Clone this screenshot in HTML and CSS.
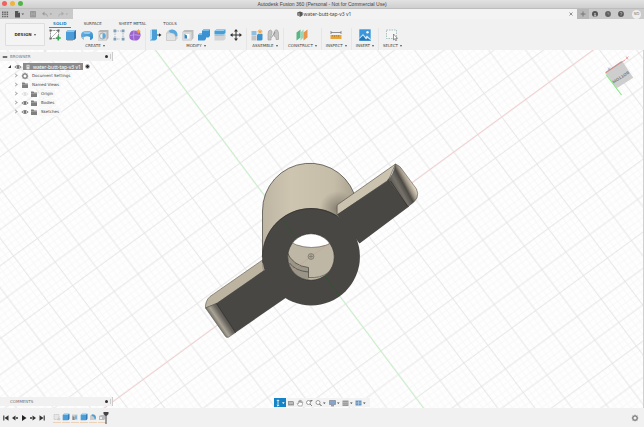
FILE: index.html
```
<!DOCTYPE html>
<html lang="en">
<head>
<meta charset="utf-8">
<title>Autodesk Fusion 360</title>
<link rel="stylesheet" href="styles.css">
</head>
<body>
<svg class="defs" aria-hidden="true">
  <defs>
    <linearGradient id="blue" x1="0" y1="0" x2="1" y2="1"><stop offset="0" stop-color="#6bb6e6"/><stop offset="1" stop-color="#2f87c9"/></linearGradient>
    <symbol id="i-cube" viewBox="0 0 12 12"><path d="M1 3l2-2h8v8l-2 2H1z" fill="#4a9dd8"/><path d="M1 3l2-2h8L9 3z" fill="#8cc9ee"/><path d="M9 3l2-2v8l-2 2z" fill="#3479b0"/></symbol>
    <symbol id="i-folder" viewBox="0 0 8 8"><path d="M1 1.500h2.500l.7 1H7V7H1z" fill="#808080"/><path d="M1 3.500h6" stroke="#bbb" stroke-width=".5"/></symbol>
    <symbol id="i-eye" viewBox="0 0 8 8"><path d="M.8 4Q4 .8 7.200 4 4 7.200.8 4z" fill="none" stroke="#888" stroke-width=".9"/><circle cx="4" cy="4" r="1.400" fill="#777"/></symbol>
    <symbol id="i-gear" viewBox="0 0 8 8"><circle cx="4" cy="4" r="2.200" fill="none" stroke="#808080" stroke-width="1.300"/><path d="M4 .7v1M4 6.300v1M.7 4h1M6.300 4h1M1.700 1.700l.7.7M5.600 5.600l.7.7M6.300 1.700l-.7.7M2.400 5.600l-.7.7" stroke="#808080" stroke-width=".9"/></symbol>
  </defs>
</svg>
<div class="app">
  <header class="titlebar">
    <div class="lights"><i class="red"></i><i class="amber"></i><i class="green"></i></div>
    <h1>Autodesk Fusion 360 (Personal - Not for Commercial Use)</h1>
  </header>

  <div class="appbar">
    <div class="quick">
      <button aria-label="Data panel"><svg viewBox="0 0 8 8"><path d="M1 1.500h1.500V3H1zM3.300 1.500h1.500V3H3.300zM5.600 1.500h1.500V3H5.600zM1 3.600h1.500v1.500H1zM3.300 3.600h1.500v1.500H3.300zM5.600 3.600h1.500v1.500H5.600zM1 5.700h1.500v1.500H1zM3.300 5.700h1.500v1.500H3.300zM5.600 5.700h1.500v1.500H5.600z" fill="#666"/></svg></button>
      <button class="wide" aria-label="File"><svg viewBox="0 0 12 8"><path d="M2 1h3l2 2v4.500H2z" fill="#555"/><path d="M5 1v2h2" fill="#aaa"/><path d="M8.500 3.500h2.600L9.800 5z" fill="#555"/></svg></button>
      <button aria-label="Save"><svg viewBox="0 0 8 8"><path d="M1.500 1.500h5v5.500h-5z" fill="#aaa" stroke="#8a8a8a" stroke-width=".7"/><path d="M2.500 2h3v1.500h-3zM2.500 4.800h3v2h-3z" fill="#999"/></svg></button>
      <button class="wide" aria-label="Undo"><svg viewBox="0 0 12 8"><path d="M3.500 1.500L1 3.800l2.500 2z" fill="#999"/><path d="M3 3.800Q6.500 3.300 6.500 6.500" fill="none" stroke="#999" stroke-width=".8"/><path d="M8.500 3.500h2.600L9.800 5z" fill="#999"/></svg></button>
      <button class="wide" aria-label="Redo"><svg viewBox="0 0 12 8"><path d="M4.500 1.500L7 3.800l-2.500 2z" fill="#aaa"/><path d="M5 3.800Q1.500 3.300 1.500 6.500" fill="none" stroke="#aaa" stroke-width=".8"/><path d="M8.500 3.500h2.600L9.800 5z" fill="#aaa"/></svg></button>
    </div>
    <div class="doc">
      <svg viewBox="0 0 6 6"><path d="M.3 1.500L3 .4l2.700 1v2.800L3.300 5.700.3 4.300z" fill="#555"/><path d="M.3 1.500L3 2.300v3.300L.3 4.300z" fill="#8a8a8a"/></svg>
      <span>water-butt-tap-v3 v1</span>
      <button class="close" aria-label="Close document"><svg viewBox="0 0 8 8"><path d="M2.500 2.500l3 3M5.500 2.500l-3 3" stroke="#777" stroke-width=".8"/></svg></button>
    </div>
    <div class="account">
      <button class="new" aria-label="New design"><svg viewBox="0 0 8 8"><path d="M4 1.500v5M1.500 4h5" stroke="#777"/></svg></button>
      <button aria-label="Extensions"><svg viewBox="0 0 8 8"><circle cx="4" cy="4" r="3" fill="#555"/><path d="M4 4.500l2 2H2.500z" fill="#ccc"/><circle cx="4" cy="3.800" r=".9" fill="#bbb"/></svg></button>
      <button aria-label="Job status"><svg viewBox="0 0 8 8"><circle cx="4" cy="4" r="2.900" fill="#606060"/><path d="M4 2.200V4h1.500" fill="none" stroke="#999" stroke-width=".7"/></svg></button>
      <button aria-label="Help"><svg viewBox="0 0 8 8"><circle cx="4" cy="4" r="2.900" fill="#555"/><path d="M3 3.300Q3 2.300 4 2.300T5 3.300Q5 4 4 4.300V5M4 5.500v.7" fill="none" stroke="#bbb" stroke-width=".7"/></svg></button>
      <button class="avatar">SD</button>
    </div>
  </div>

  <div class="ribbon">
    <button class="workspace">DESIGN <i class="caret"></i></button>
    <div class="ribbon-main">
      <nav class="tabs">
        <a href="#" class="active">SOLID</a><a href="#">SURFACE</a><a href="#">SHEET METAL</a><a href="#">TOOLS</a>
      </nav>
      <div class="groups">
        <section class="group">
          <div class="tools">
            <button aria-label="Create sketch"><svg viewBox="0 0 12 12"><path d="M1.500 1.500h8v8h-8z" fill="#fff" stroke="#777" stroke-width=".8" stroke-dasharray="2 .8"/><path d="M2 9l7-7" stroke="#999" stroke-width=".7"/><path d="M.5.5h2v2h-2zM8.500.5h2v2h-2zM.5 8.500h2v2h-2z" fill="#666"/><path d="M9.300 6.500v5M6.800 9h5" stroke="#35a853" stroke-width="1.700"/></svg></button>
            <button aria-label="Extrude"><svg viewBox="0 0 12 12"><use href="#i-cube"/><path d="M2 11.500h6" stroke="#bbb"/></svg></button>
            <button aria-label="Revolve"><svg viewBox="0 0 12 12"><path d="M0 6q0-4 6-4t6 4v3q-1 2-3 2V8Q6 6.500 3 8v2.500Q0 9 0 6z" fill="url(#blue)"/><ellipse cx="6" cy="3.800" rx="3.500" ry="1.200" fill="#8fcbf0"/><path d="M0 8.500l3-1v3.500z" fill="#bbb"/></svg></button>
            <button aria-label="Hole"><svg viewBox="0 0 12 12"><path d="M1 3l2-2h8.500v8l-2 2.500H1z" fill="#b5b5b5"/><path d="M1 3h8.500v8.500H1z" fill="#d9d9d9"/><circle cx="5.500" cy="7" r="3" fill="#eee" stroke="#999" stroke-width=".8"/><path d="M5.500 4.200a2.800 2.800 0 0 1 0 5.600z" fill="#5aa9dc"/></svg></button>
            <button aria-label="Pattern"><svg viewBox="0 0 12 12"><path d="M2 2h8v8M2 2v8h5" fill="none" stroke="#9ab" stroke-width=".8" stroke-dasharray="1.500 1"/><path d="M.5.500h2.800v2.800H.5zM8.700.5h2.800v2.800H8.700zM.5 8.700h2.800v2.800H.5zM8.700 8.700h2.800v2.800H8.700z" fill="#7f9fb8"/></svg></button>
            <button aria-label="Create form"><svg viewBox="0 0 12 12"><path d="M1 4q1-3 4-2.500L10 2q2 2 1.500 5T8 11.500Q3 12 1 10-.3 7 1 4z" fill="#9a63cf"/><path d="M1 6.500q5-1.500 10.500 0M5 2q-1 5 0 9.500" fill="none" stroke="#c9a4ec" stroke-width=".8"/><path d="M9.500.3v4M7.500 2.300h4M8.100.9l2.800 2.800M10.900.9L8.100 3.700" stroke="#f2a33a" stroke-width=".9"/></svg></button>
          </div>
          <button class="label">CREATE <i class="caret"></i></button>
        </section>
        <section class="group">
          <div class="tools">
            <button aria-label="Press pull"><svg viewBox="0 0 12 12"><path d="M0 2L2 .5h5V10l-2 1.500H0z" fill="#4a9ed6"/><path d="M0 2L2 .5V10L0 11.500z" fill="#bcdcf0"/><path d="M7 6h3" stroke="#333" stroke-width=".9"/><path d="M9 4.300L11.500 6 9 7.700z" fill="#333"/></svg></button>
            <button aria-label="Fillet"><svg viewBox="0 0 12 12"><path d="M.5 11.500V4q1-3.500 5-3.500 6 .5 6 6v3l-2 2z" fill="#d0d0d0"/><path d="M2.500 2Q4 .5 6 .5q5.500.5 5.500 6L9.500 8Q9 4 4.500 4z" fill="#5aa9de"/><path d="M.5 11.500V4h4Q9 4 9.500 8v3.500z" fill="#e2e2e2" stroke="#bbb" stroke-width=".5"/></svg></button>
            <button aria-label="Shell"><svg viewBox="0 0 12 12"><path d="M.5 3l2-2h9v8l-2 2.500h-9z" fill="#bdbdbd"/><path d="M.5 3h9v8.500h-9z" fill="#d8d8d8"/><path d="M2.500 5h5v4.500h-5z" fill="#fff"/><path d="M2.500 5L5 6.500v3H2.500z" fill="#3285bf"/></svg></button>
            <button aria-label="Combine"><svg viewBox="0 0 12 12"><path d="M0 6l1.500-1.500H4V2L5.500.5H12V7l-1.500 1.500H8V10l-1.500 1.500H0z" fill="#3c92d0"/><path d="M4 2L5.500.5H12L10.500 2zM0 6l1.500-1.500H4V6z" fill="#78bce8"/></svg></button>
            <button aria-label="Split body"><svg viewBox="0 0 12 12"><path d="M.5 2l2-1.500h9V4l-2 1.500h-9z" fill="#4a9ed6"/><path d="M.5 2l2-1.500h9L9.500 2z" fill="#9bd0f0"/><path d="M.5 7l2-1h9v4l-2 1.500h-9z" fill="#d4d4d4"/><path d="M.5 6.500l9-.3 2-1" stroke="#8ab" stroke-width=".6" fill="none"/></svg></button>
            <button aria-label="Move"><svg viewBox="0 0 12 12"><path d="M6 1.500v9M1.500 6h9" stroke="#333"/><path d="M6 0l2 2.600H4zM6 12l2-2.600H4zM0 6l2.600-2v4zM12 6L9.400 4v4z" fill="#333"/></svg></button>
          </div>
          <button class="label">MODIFY <i class="caret"></i></button>
        </section>
        <section class="group">
          <div class="tools">
            <button aria-label="New component"><svg viewBox="0 0 12 12"><path d="M.5 2h5v4.500h-5z" fill="#8fbfe0"/><path d="M.5 7h5v4.500h-5z" fill="#c4c4c4"/><path d="M6 6l1-1h4.500v5.500l-1 1H6z" fill="#3c92d0"/><path d="M9 .3v5M6.500 2.800h5M7.300 1l3.500 3.600M10.800 1L7.300 4.600" stroke="#f2a33a" stroke-width=".9"/></svg></button>
            <button aria-label="Joint"><svg viewBox="0 0 12 12"><path d="M1 11V5Q1 1 3.500 1 5.500 1.500 5 4L4 7v4zM11.500 10.500V4Q11 .5 9 .8 7 1.500 7 4v3l2 1.500v2z" fill="#c4c4c4" stroke="#9a9a9a" stroke-width=".6"/><path d="M4.500 8.500L8 3" stroke="#777" stroke-width=".7"/></svg></button>
          </div>
          <button class="label">ASSEMBLE <i class="caret"></i></button>
        </section>
        <section class="group">
          <div class="tools"><button aria-label="Construct plane"><svg viewBox="0 0 12 12"><path d="M.5 3.500l4-3v8l-4 3z" fill="#58b686"/><path d="M4.500 3.500l3-3v8l-3 3z" fill="#9bd3b4"/><path d="M7.500 3.500l4-3v8l-4 3z" fill="#e8954e"/></svg></button></div>
          <button class="label">CONSTRUCT <i class="caret"></i></button>
        </section>
        <section class="group">
          <div class="tools"><button aria-label="Measure"><svg viewBox="0 0 12 12"><path d="M1 2v3M11 2v3M1 3.500h10" stroke="#777" stroke-width=".8"/><path d="M.5 6h11v4H.5z" fill="#e7a63d"/><path d="M2.500 6v1.500M4.500 6v2M6.500 6v1.500M8.500 6v2" stroke="#9b6b1c" stroke-width=".5"/></svg></button></div>
          <button class="label">INSPECT <i class="caret"></i></button>
        </section>
        <section class="group">
          <div class="tools"><button aria-label="Insert image"><svg viewBox="0 0 12 12"><path d="M.3.3h11.400v11.400H.3z" fill="#3b97dc"/><path d="M.3 9L4 5l2.500 3L8 6.500 11.700 10v1.700H.3z" fill="#d4eafa"/><path d="M.3 10L4 6.500l3 4 1.500-1.500 3.200 2.200v.5H.3z" fill="#2478b8"/><circle cx="8.500" cy="3.300" r="1.200" fill="#fff"/></svg></button></div>
          <button class="label">INSERT <i class="caret"></i></button>
        </section>
        <section class="group">
          <div class="tools"><button aria-label="Select"><svg viewBox="0 0 12 12"><path d="M.5 1h10v8.500H.5z" fill="#f6f6f6" stroke="#8aa" stroke-width=".7" stroke-dasharray="1.500 1"/><path d="M7.500 5v6l1.300-1.200.9 2 .9-.4-.9-2h1.800z" fill="#fff" stroke="#555" stroke-width=".6"/></svg></button></div>
          <button class="label">SELECT <i class="caret"></i></button>
        </section>
      </div>
    </div>
  </div>

  <main class="viewport">
    <svg class="scene" viewBox="0 50 644 358" preserveAspectRatio="xMidYMid slice" role="img" aria-label="Tap model on grid">
      <defs>
        <pattern id="grid" width="150" height="150" patternUnits="userSpaceOnUse" patternTransform="matrix(.797 -.583 .587 .783 311 257)">
          <path d="M6 0v150M12 0v150M18 0v150M24 0v150M36 0v150M42 0v150M48 0v150M54 0v150M66 0v150M72 0v150M78 0v150M84 0v150M96 0v150M102 0v150M108 0v150M114 0v150M126 0v150M132 0v150M138 0v150M144 0v150M0 6h150M0 12h150M0 18h150M0 24h150M0 36h150M0 42h150M0 48h150M0 54h150M0 66h150M0 72h150M0 78h150M0 84h150M0 96h150M0 102h150M0 108h150M0 114h150M0 126h150M0 132h150M0 138h150M0 144h150" stroke="#f6f6f6" stroke-width=".8"/>
          <path d="M0 0v150M30 0v150M60 0v150M90 0v150M120 0v150M150 0v150M0 0h150M0 30h150M0 60h150M0 90h150M0 120h150M0 150h150" stroke="#e3e3e3" stroke-width=".9"/>
        </pattern>
        <linearGradient id="barrel" x1="263" x2="358" y1="0" y2="0" gradientUnits="userSpaceOnUse"><stop offset="0" stop-color="#bdb5a2"/><stop offset=".3" stop-color="#cec5b1"/><stop offset=".75" stop-color="#c6bda9"/><stop offset="1" stop-color="#a59d8b"/></linearGradient>
        <linearGradient id="tipR" x1="390" y1="187" x2="414" y2="174" gradientUnits="userSpaceOnUse"><stop offset="0" stop-color="#454440"/><stop offset=".3" stop-color="#77736b"/><stop offset=".5" stop-color="#4d4a45"/><stop offset=".62" stop-color="#9a9182"/><stop offset=".8" stop-color="#ded5c1"/><stop offset="1" stop-color="#968d7c"/></linearGradient>
        <linearGradient id="tipL" x1="217" y1="324" x2="229" y2="316" gradientUnits="userSpaceOnUse"><stop offset="0" stop-color="#77736a"/><stop offset=".25" stop-color="#aaa496"/><stop offset=".6" stop-color="#696660"/><stop offset="1" stop-color="#494844"/></linearGradient>
        <radialGradient id="shade" cx="338" cy="209" r="18" gradientUnits="userSpaceOnUse"><stop offset="0" stop-color="#5d584e" stop-opacity=".6"/><stop offset="1" stop-color="#5d584e" stop-opacity="0"/></radialGradient>
        <clipPath id="bore"><circle cx="311.500" cy="257" r="23.300"/></clipPath>
      </defs>
      <path d="M0 50h644v358H0z" fill="#fefefe"/>
      <path d="M0 50h644v358H0z" fill="url(#grid)"/>
      <path d="M104 408.600L594 49.800" stroke="#f5cbcb" stroke-width=".9"/>
      <path d="M156 50l269.500 360" stroke="#c0f0c0" stroke-width=".9"/>

      <path d="M263 257v-46a47.400 47.400 0 0 1 94-9l-4 48z" fill="url(#barrel)" stroke="#3f3d38" stroke-width=".7"/>
      <path d="M263.500 257v-46a47 47 0 0 1 92.500-9l-4 48z" fill="url(#shade)"/>
      <path d="M337.600 205l58.400-41-7 16-51.400 35z" fill="#cbc2af" stroke="#4b483f" stroke-width=".6"/>
      <path d="M263 260l-52.500 36.500Q205.500 301 206 308l12-5 46-32z" fill="#bcb4a1" stroke="#5a564c" stroke-width=".6"/>
      <path d="M337.600 214.500L389 180l20.500 26.500-49.500 37z" fill="#484743"/>
      <path d="M388 180q6-4 8-16 5 2 7 6l14 19q2 4 .5 9-2 4-9 8.500z" fill="url(#tipR)" stroke="#3d3b36" stroke-width=".5"/>
      <path d="M391 181l17 25" stroke="#2c2b28" stroke-width=".7"/>
      <path d="M216 304l49-34 24 26-53.500 37z" fill="#484743"/>
      <path d="M206 308l11-4.500 19 29-7 4.700q-2 .6-3-.8z" fill="url(#tipL)" stroke="#4b4943" stroke-width=".5"/>
      <path d="M217 303.500l19 29" stroke="#2d2c29" stroke-width=".6"/>
      <circle cx="311.700" cy="256.700" r="48.700" fill="#484743"/>
      <path d="M263.200 263a48.600 48.600 0 0 1 74-47" fill="none" stroke="#2f2e2b" stroke-width=".6"/>
      <path d="M284 221l56 74.800" stroke="#285a2b" stroke-width=".7"/>
      <g clip-path="url(#bore)">
        <path d="M287 233h49v48h-49z" fill="#bfb7a5"/>
        <path d="M286 232h51v7q-8 8-25 8.500-17-1-26-8.500z" fill="#fff"/>
        <path d="M286 238q9 9 26 9.500 17-.5 25-8.500" fill="none" stroke="#55524a" stroke-width=".6"/>
        <path d="M287 251q6 15 22 16.500V282h-23z" fill="#9a9587"/>
        <path d="M287 251q6 15 22 16.500V278M290 263q6 8 19 9" fill="none" stroke="#45433c" stroke-width=".7"/>
        <path d="M309 277.500q12 1 20-5" fill="none" stroke="#78736a" stroke-width="1"/>
        <path d="M292 271l38-28" stroke="#c99b8c" stroke-width=".5"/>
      </g>
      <circle cx="311.500" cy="257" r="23.300" fill="none" stroke="#34332f" stroke-width=".7"/>
      <circle cx="311.500" cy="256.500" r="2.900" fill="#b2ab9a" stroke="#77736a" stroke-width=".8"/>
      <path d="M309.500 256.500h4M311.500 254.500v4" stroke="#77736a" stroke-width=".7"/>
    </svg>

    <svg class="viewcube" viewBox="600 54 36 44" role="img" aria-label="View cube">
      <path d="M605.700 73.300l17-11.600 10.600 16-16.600 10.600z" fill="#cecece"/>
      <path d="M605.700 73.300l-.3-1.200 15.700-10.800 1.600.4z" fill="#b0a4a4"/>
      <path d="M605.500 73L625 60" stroke="#e58080" stroke-width=".8"/>
      <path d="M606 74.500L621.500 95" stroke="#7eea7e" stroke-width="1.100"/>
      <text transform="translate(620 76) rotate(147)" text-anchor="middle">BOTTOM</text>
      <path d="M626 56.500l2 3M628.500 56.500l-3 3" stroke="#e58a8a" stroke-width=".7"/>
      <path d="M608 67.500l2 2.500M610 67.500L608 70" stroke="#99b" stroke-width=".6"/>
    </svg>

    <aside class="browser">
      <div class="panel-head"><svg viewBox="0 0 8 8"><path d="M1 3h6v2H1z" fill="#444"/></svg><span>BROWSER</span><i class="dot"></i><i class="grip"></i></div>
      <ul class="tree">
        <li class="root"><i class="open"></i><svg><use href="#i-eye"/></svg><span class="sel"><svg viewBox="0 0 8 8"><path d="M2 1h4v6H2z" fill="#ddd"/><path d="M3 3h2" stroke="#888"/></svg>water-butt-tap-v3 v1</span><i class="radio"></i></li>
        <li><i class="arrow"></i><svg><use href="#i-gear"/></svg><span>Document Settings</span></li>
        <li><i class="arrow"></i><svg><use href="#i-folder"/></svg><span>Named Views</span></li>
        <li><i class="arrow"></i><svg class="off"><use href="#i-eye"/></svg><svg><use href="#i-folder"/></svg><span>Origin</span></li>
        <li><i class="arrow"></i><svg><use href="#i-eye"/></svg><svg><use href="#i-folder"/></svg><span>Bodies</span></li>
        <li><i class="arrow"></i><svg><use href="#i-eye"/></svg><svg><use href="#i-folder"/></svg><span>Sketches</span></li>
      </ul>
    </aside>

    <div class="panel-head comments"><span>COMMENTS</span><i class="dot"></i><i class="grip"></i></div>

    <div class="navbar">
      <button class="on wide" aria-label="Orbit"><svg viewBox="0 0 12 8"><path d="M4 1v6M2.800 2L4 .8 5.200 2M2.800 6L4 7.200 5.200 6" stroke="#fff" stroke-width=".8" fill="none"/><path d="M8 3.300h2.600L9.300 4.900z" fill="#fff"/></svg></button>
      <button aria-label="Look at"><svg viewBox="0 0 8 8"><path d="M1 2h5l1 1v3.500H1z" fill="#999"/><path d="M2 4h4" stroke="#ddd"/></svg></button>
      <button aria-label="Pan"><svg viewBox="0 0 8 8"><path d="M2.500 7L1 4.500l1-.3.500.6V2h1v1.500V1.300h1V3.500l.2-1.800h.9V4l.6-1.200.6.3L6 7z" fill="#fff" stroke="#888" stroke-width=".6"/></svg></button>
      <button aria-label="Zoom"><svg viewBox="0 0 8 8"><circle cx="3.500" cy="3.500" r="2" fill="#fff" stroke="#777" stroke-width=".7"/><path d="M5 5l2 2M6 1v2M5.500 1.500h2" stroke="#666" stroke-width=".8"/></svg></button>
      <button class="wide" aria-label="Fit"><svg viewBox="0 0 12 8"><circle cx="4" cy="3.500" r="2" fill="#fff" stroke="#777" stroke-width=".7"/><path d="M5.500 5l2 2" stroke="#555"/><path d="M9 3.500h2.600L10.300 5z" fill="#444"/></svg></button>
      <button class="wide gap" aria-label="Display settings"><svg viewBox="0 0 12 8"><path d="M1.500 1.500h6v4h-6z" fill="#7fa8cc" stroke="#778" stroke-width=".6"/><path d="M3 6.800h3" stroke="#777"/><path d="M9 3.500h2.600L10.300 5z" fill="#444"/></svg></button>
      <button class="wide" aria-label="Grid settings"><svg viewBox="0 0 12 8"><path d="M1.500 1.500h6v5.500h-6z" fill="#999"/><path d="M1.500 3.500h6M1.500 5.200h6" stroke="#ccc" stroke-width=".5"/><path d="M9 3.500h2.600L10.300 5z" fill="#444"/></svg></button>
      <button class="wide" aria-label="Viewports"><svg viewBox="0 0 12 8"><path d="M1.500 1.500h6v5h-6z" fill="#6794c0"/><path d="M4.500 1.500v5M1.500 4h6" stroke="#c3d6e8" stroke-width=".6"/><path d="M9 3.500h2.600L10.300 5z" fill="#444"/></svg></button>
    </div>
  </main>

  <footer class="timeline">
    <div class="player">
      <button aria-label="To start"><svg viewBox="0 0 8 8"><path d="M1.800 1.500v5" stroke="#333" stroke-width="1.100"/><path d="M6.500 1.300v5.400L2.500 4z" fill="#333"/></svg></button>
      <button aria-label="Step back"><svg viewBox="0 0 8 8"><path d="M4.500 1.500v5L1 4z" fill="#333"/><path d="M5 4h2" stroke="#333" stroke-width="1.600"/></svg></button>
      <button aria-label="Play"><svg viewBox="0 0 8 8"><path d="M2 1v6l4.500-3z" fill="#222"/></svg></button>
      <button aria-label="Step forward"><svg viewBox="0 0 8 8"><path d="M3.500 1.500v5L7 4z" fill="#333"/><path d="M1 4h2" stroke="#333" stroke-width="1.600"/></svg></button>
      <button aria-label="To end"><svg viewBox="0 0 8 8"><path d="M6.200 1.500v5" stroke="#333" stroke-width="1.100"/><path d="M1.500 1.300v5.400L5.500 4z" fill="#333"/></svg></button>
    </div>
    <div class="features">
      <button aria-label="Sketch"><svg viewBox="0 0 8 8"><path d="M1 1.500h5v5H1z" fill="#e6e6e6" stroke="#b5b5b5" stroke-width=".6" stroke-dasharray="1.500 .7"/><path d="M6 4.500v3M4.500 6h3" stroke="#bbb" stroke-width=".7"/></svg></button>
      <button aria-label="Extrude"><svg viewBox="0 0 12 12"><use href="#i-cube"/></svg></button>
      <button aria-label="Shell"><svg viewBox="0 0 8 8"><path d="M1 1.500h5.500V7H1z" fill="#ccc"/><path d="M1.500 3l2 1v3h-2z" fill="#888"/><path d="M4 2.500h2V6H4z" fill="#7db4dc"/></svg></button>
      <button aria-label="Extrude"><svg viewBox="0 0 12 12"><use href="#i-cube"/></svg></button>
      <button aria-label="Fillet"><svg viewBox="0 0 8 8"><path d="M1 7V3q1-2 3-2 3 .5 3 3.500V7z" fill="#ccc"/><path d="M3 1.500q4-.5 4 4L5.500 6Q5.500 3 2.500 3z" fill="#4a9ed6"/></svg></button>
      <button aria-label="Chamfer"><svg viewBox="0 0 8 8"><path d="M1 3l2-1h4v4L6 7H1z" fill="#bbb"/><path d="M2 4h2v2H2z" fill="#eee"/></svg></button>
      <svg class="marker" viewBox="0 0 6 14"><path d="M.5 1h5v2L3.500 5v8h-1V5L.5 3z" fill="#444"/></svg>
    </div>
    <button class="settings" aria-label="Timeline settings"><svg><use href="#i-gear"/></svg></button>
  </footer>
</div>
</body>
</html>
```
FILE: styles.css
```
* { box-sizing: border-box; }

body {
  margin: 0;
  font: 4px/8px "DejaVu Sans", Verdana, sans-serif;
  color: #444;
  background: #f1f1f1;
}

button {
  display: flex;
  align-items: center;
  justify-content: center;
  margin: 0;
  padding: 0;
  border: 0;
  background: none;
  color: inherit;
  font: inherit;
}

a { color: inherit; text-decoration: none; }
svg { display: block; flex: none; width: 8px; height: 8px; }
.defs { position: absolute; width: 0; height: 0; }

.app {
  display: flex;
  flex-direction: column;
  height: 100vh;
  overflow: hidden;
}

.caret {
  display: inline-block;
  margin-left: 2px;
  border: 1px solid transparent;
  border-top: 2px solid #555;
  border-bottom: 0;
}

/* Window title */
.titlebar {
  display: grid;
  grid-template-columns: 1fr auto 1fr;
  flex: none;
  height: 9px;
  border-bottom: 1px solid #bdbdbd;
  background: linear-gradient(#e2e2e2, #cfcfcf);
}
.titlebar h1 {
  margin: 0;
  font: 5px/8px "Liberation Sans", Arial, sans-serif;
}
.lights { display: flex; gap: 3px; padding: 1px 2px; }
.lights i { width: 5px; height: 5px; border-radius: 50%; }
.red { background: #f0625a; }
.amber { background: #f0b43c; }
.green { background: #53b548; }

/* Document bar */
.appbar { display: flex; flex: none; height: 10px; background: #f3f3f3; }
.quick {
  display: flex;
  align-items: center;
  gap: 4px;
  width: 73px;
  padding-left: 1px;
  background: #c9c9c9;
}
.wide, .wide svg { width: 12px; }
.doc {
  display: flex;
  flex: 1;
  align-items: center;
  justify-content: center;
  gap: 1px;
  line-height: 10px;
}
.doc svg { width: 6px; height: 6px; }
.doc span, .tree .sel { font-family: "Noto Sans", "Open Sans", sans-serif; font-size: 5px; }
.doc span { flex: none; }
.doc::before { content: ""; flex: 1; }
.doc .close { flex: 1; justify-content: flex-end; padding-right: 2px; }
.doc .close svg { width: 8px; height: 8px; }
.account {
  display: flex;
  align-items: center;
  gap: 5px;
  width: 67px;
  background: #cacaca;
}
.account .new { width: 12px; height: 10px; margin-right: -3px; background: #b8b8b8; }
.account .avatar {
  width: 9px;
  height: 9px;
  margin-left: 2px;
  border-radius: 50%;
  background: #eee;
  color: #777;
}

/* Ribbon */
.ribbon {
  display: flex;
  flex: none;
  height: 31px;
  padding-left: 5px;
  background: #f1f1f1;
}
.workspace {
  width: 40px;
  height: 23px;
  margin-top: 4px;
  border: 1px solid #dedede;
  border-radius: 1px;
  background: #f4f4f4;
  color: #333;
  font-weight: bold;
}
.tabs { display: flex; height: 9px; padding-left: 4px; }
.tabs a { margin-right: 9px; padding: 0 4px; line-height: 9px; }
.tabs .active { border-bottom: 1px solid #1f93d4; color: #1f86c2; font-weight: bold; }
.groups { display: flex; }
.group {
  display: flex;
  flex-direction: column;
  align-items: center;
  padding: 1px 4px 0;
  border-right: 1px solid #e6e6e6;
}
.group:last-child { border-right: 0; }
.tools { display: flex; gap: 4px; }
.tools svg { width: 12px; height: 12px; }
.label { height: 9px; white-space: nowrap; }

/* Canvas */
.viewport {
  position: relative;
  flex: 1;
  min-height: 0;
  border-right: 1px solid #d0d0d0;
  background: #fefefe;
}
.scene { position: absolute; inset: 0; width: 100%; height: 100%; }
.viewcube { position: absolute; top: 4px; right: 7px; width: 36px; height: 44px; }
.viewcube text { fill: #888; font-weight: bold; }

.browser { position: absolute; top: 2px; left: 0; }
.panel-head {
  display: flex;
  align-items: center;
  gap: 2px;
  width: 113px;
  height: 9px;
  border-right: 1px solid #ccc;
  background: #f1f1f1;
  color: #777;
}
.panel-head svg { width: 6px; margin-left: 2px; }
.panel-head .dot { width: 3px; height: 3px; margin-left: auto; border-radius: 50%; background: #333; }
.panel-head .grip { width: 1px; height: 5px; margin-right: 1px; background: #ccc; }
.comments { position: absolute; bottom: 2px; left: 0; padding-left: 10px; }

.tree { margin: 1px 0 0; padding: 0; list-style: none; }
.tree li { display: flex; align-items: center; gap: 1px; height: 9px; padding-left: 14px; }
.tree span { padding: 0 2px; background: #f8f8f8; }
.tree .off { opacity: 0.2; }
.tree .arrow {
  width: 3px;
  height: 3px;
  margin-right: 3px;
  border: solid #aaa;
  border-width: 1px 1px 0 0;
  transform: rotate(45deg);
}
.tree .root { padding-left: 8px; }
.tree .open {
  margin-right: 2px;
  border-top: 3px solid transparent;
  border-right: 3px solid #333;
}
.tree .sel {
  display: flex;
  align-items: center;
  gap: 2px;
  height: 7px;
  background: #8b8b8b;
  color: #fff;
}
.tree .sel svg { width: 6px; height: 6px; }
.tree .radio { width: 5px; height: 5px; margin-left: 1px; border: 1px solid #bbb; border-radius: 50%; background: #333; }

.navbar {
  position: absolute;
  bottom: 1px;
  left: 50%;
  display: flex;
  align-items: center;
  gap: 1px;
  height: 9px;
  padding-right: 4px;
  background: #f3f3f3;
  transform: translateX(-50%);
}
.navbar .on { height: 9px; background: #1583c5; }
.navbar .gap { margin-left: 1px; }

/* Timeline */
.timeline {
  display: flex;
  flex: none;
  align-items: center;
  height: 19px;
  padding: 0 5px 0 2px;
  background: #f1f1f1;
}
.player { display: flex; gap: 1px; }
.features {
  display: flex;
  align-items: center;
  gap: 1px;
  height: 14px;
  margin-left: 7px;
}
.features button { padding-bottom: 1px; border-bottom: 1px solid #ecd2b8; }
.features .marker { width: 6px; height: 14px; margin-left: -4px; }
.settings { margin-left: auto; }
```
